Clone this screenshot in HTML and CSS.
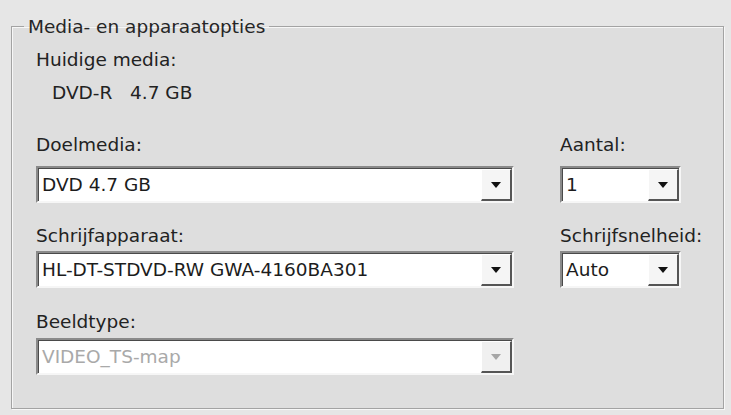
FILE: index.html
```html
<!DOCTYPE html>
<html lang="nl">
<head>
<meta charset="utf-8">
<title>Media- en apparaatopties</title>
<link rel="stylesheet" href="styles.css">
</head>
<body>
<fieldset class="group">
  <legend class="group-title">Media- en apparaatopties</legend>
  <div class="label cur-label">Huidige media:</div>
  <div class="cur-value">DVD-R&nbsp;&nbsp;&nbsp;4.7 GB</div>

  <div class="fields">
    <div class="label row1">Doelmedia:</div>
    <div class="label row1">Aantal:</div>
    <div class="combo"><span class="combo-text">DVD 4.7 GB</span><span class="combo-btn"><span class="arrow"></span></span></div>
    <div class="combo"><span class="combo-text">1</span><span class="combo-btn"><span class="arrow"></span></span></div>

    <div class="label row2">Schrijfapparaat:</div>
    <div class="label row2">Schrijfsnelheid:</div>
    <div class="combo"><span class="combo-text">HL-DT-STDVD-RW GWA-4160BA301</span><span class="combo-btn"><span class="arrow"></span></span></div>
    <div class="combo"><span class="combo-text">Auto</span><span class="combo-btn"><span class="arrow"></span></span></div>

    <div class="label row3">Beeldtype:</div>
    <div class="spacer"></div>
    <div class="combo disabled"><span class="combo-text">VIDEO_TS-map</span><span class="combo-btn"><span class="arrow"></span></span></div>
  </div>
</fieldset>
</body>
</html>
```

FILE: styles.css
```css
html, body {
  margin: 0;
  padding: 0;
}
body {
  width: 731px;
  height: 415px;
  overflow: hidden;
  background: #e6e6e6;
  font-family: "DejaVu Sans", "Liberation Sans", sans-serif;
  font-size: 18.5px;
  line-height: 20px;
  color: #222222;
}

.group {
  margin: 15px 7px 0 11px;
  padding: 0 0 33px 24px;
  border: 1px solid #a3a3a3;
  box-shadow: inset 1px 1px 0 #f7f7f7, 1px 1px 0 #f7f7f7;
  background: #dedede;
  min-width: 0;
}

.group-title {
  margin-left: -12px;
  padding: 2px 4px 0 4px;
  line-height: 20px;
  color: #262626;
}

.label {
  line-height: 20px;
}

.cur-label {
  margin-top: 13px;
}

.cur-value {
  margin-top: 13px;
  margin-left: 16px;
}

.fields {
  display: grid;
  grid-template-columns: 478px 121px;
  column-gap: 46px;
  margin-top: 32px;
}

.row1 { margin-bottom: 11px; }
.row2 { margin-top: 23px; margin-bottom: 5px; }
.row3 { margin-top: 24px; margin-bottom: 6px; }

.combo {
  display: flex;
  align-items: stretch;
  height: 37px;
  box-sizing: border-box;
  border-top: 2px solid #8a8a8a;
  border-left: 2px solid #8a8a8a;
  border-right: 2px solid #f6f6f6;
  border-bottom: 2px solid #f6f6f6;
  box-shadow: inset 1px 1px 0 #4a4a4a;
  background: #ffffff;
}

.combo-text {
  flex: 1;
  padding-left: 4px;
  padding-top: 1px;
  line-height: 31px;
  white-space: nowrap;
  overflow: hidden;
  color: #1c1c1c;
}

.combo-btn {
  width: 31px;
  margin: 1px 0 0 0;
  box-sizing: border-box;
  background: #f5f5f5;
  border-top: 1px solid #ffffff;
  border-left: 1px solid #ffffff;
  border-right: 2px solid #555555;
  border-bottom: 2px solid #555555;
  display: flex;
  align-items: center;
  justify-content: center;
}

.arrow {
  width: 0;
  height: 0;
  border-left: 5px solid transparent;
  border-right: 5px solid transparent;
  border-top: 6px solid #111111;
}

.disabled .combo-text {
  color: #a9a9a9;
}
.disabled .arrow {
  border-top-color: #a6a6a6;
}
.disabled .combo-btn {
  background: #f0f0f0;
}
```
